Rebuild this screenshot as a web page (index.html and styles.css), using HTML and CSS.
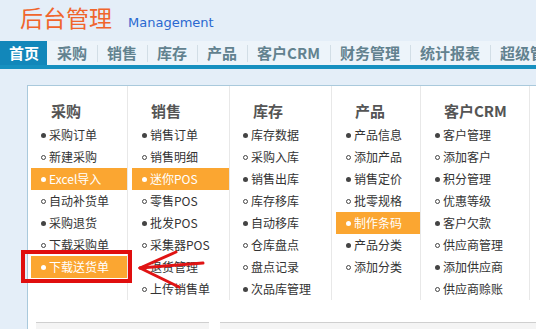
FILE: index.html
```html
<!DOCTYPE html>
<html lang="zh-CN">
<head>
  <meta charset="UTF-8">
  <title>后台管理</title>
  <link rel="stylesheet" href="styles.css">
</head>
<body>
  <div class="page">
    <header class="top">
      <h1 class="logo">后台管理</h1>
      <span class="logo-en">Management</span>
    </header>

    <nav class="menu">
      <a class="on first">首页</a>
      <a>采购</a>
      <a>销售</a>
      <a>库存</a>
      <a>产品</a>
      <a>客户CRM</a>
      <a>财务管理</a>
      <a>统计报表</a>
      <a>超级管理</a>
    </nav>

    <div class="panel">
      <div class="cols">
        <div class="col c1">
          <h3>采购</h3>
          <ul>
            <li class="dot">采购订单</li>
            <li class="ring">新建采购</li>
            <li class="dot cur">Excel导入</li>
            <li class="ring">自动补货单</li>
            <li class="dot">采购退货</li>
            <li class="ring">下载采购单</li>
            <li class="dot cur">下载送货单</li>
          </ul>
        </div>
        <div class="col c2">
          <h3>销售</h3>
          <ul>
            <li class="dot">销售订单</li>
            <li class="ring">销售明细</li>
            <li class="dot cur">迷你POS</li>
            <li class="ring">零售POS</li>
            <li class="dot">批发POS</li>
            <li class="ring">采集器POS</li>
            <li class="dot">退货管理</li>
            <li class="ring">上传销售单</li>
          </ul>
        </div>
        <div class="col c3">
          <h3>库存</h3>
          <ul>
            <li class="dot">库存数据</li>
            <li class="ring">采购入库</li>
            <li class="dot">销售出库</li>
            <li class="ring">库存移库</li>
            <li class="dot">自动移库</li>
            <li class="ring">仓库盘点</li>
            <li class="ring">盘点记录</li>
            <li class="dot">次品库管理</li>
          </ul>
        </div>
        <div class="col c4">
          <h3>产品</h3>
          <ul>
            <li class="dot">产品信息</li>
            <li class="ring">添加产品</li>
            <li class="dot">销售定价</li>
            <li class="ring">批零规格</li>
            <li class="dot cur">制作条码</li>
            <li class="dot">产品分类</li>
            <li class="ring">添加分类</li>
          </ul>
        </div>
        <div class="col c5">
          <h3>客户CRM</h3>
          <ul>
            <li class="dot">客户管理</li>
            <li class="ring">添加客户</li>
            <li class="dot">积分管理</li>
            <li class="ring">优惠等级</li>
            <li class="dot">客户欠款</li>
            <li class="ring">供应商管理</li>
            <li class="dot">添加供应商</li>
            <li class="ring">供应商赊账</li>
          </ul>
        </div>
        <div class="col c6"></div>
      </div>

      <div class="boxes">
        <div class="box b1"></div>
        <div class="box b2"></div>
      </div>
    </div>

    <!-- red annotation -->
    <div class="mark"></div>
    <svg class="arrow" width="80" height="50" viewBox="0 0 80 50">
      <g stroke="#e01414" stroke-width="3" stroke-linecap="round" fill="none">
        <line x1="4" y1="20" x2="67" y2="15"/>
        <line x1="4" y1="20" x2="40" y2="4"/>
        <line x1="4" y1="20" x2="43" y2="39"/>
      </g>
    </svg>
  </div>
</body>
</html>
```

FILE: styles.css
```css
html, body {
  margin: 0;
  height: 100%;
  overflow: hidden;
}

body {
  background-color: #e4eef8;
  font-family: "Noto Sans CJK SC", sans-serif;
  color: #333;
}

.page {
  position: relative;
}

/* header */
.top {
  height: 41px;
  display: flex;
  align-items: baseline;
  padding-left: 20px;
  box-sizing: border-box;
}

.logo {
  margin: 0;
  font-size: 23px;
  font-weight: normal;
  line-height: 34px;
  color: #f0652c;
  letter-spacing: 0;
}

.logo-en {
  margin-left: 16px;
  font-family: "DejaVu Sans", Verdana, sans-serif;
  font-size: 13px;
  color: #2a68d0;
}

/* menu */
.menu {
  display: flex;
  height: 24px;
  background-color: #edf4fa;
  border-bottom: 4px solid #1690c0;
  white-space: nowrap;
  overflow: hidden;
}

.menu a {
  position: relative;
  flex: none;
  padding: 0 10px;
  font-size: 15px;
  font-weight: bold;
  line-height: 24px;
  color: #62828f;
  cursor: pointer;
}

.menu a + a::before {
  content: "";
  position: absolute;
  left: 0;
  top: 4px;
  width: 1px;
  height: 17px;
  background-color: #d2dee6;
}

.menu a.first {
  padding: 0 8px 0 9px;
}

.menu a.on {
  background-color: #1287ba;
  color: #fff;
}

.menu a.on + a::before {
  display: none;
}

/* panel */
.panel {
  margin: 16px 0 0 27px;
  background-color: #fff;
  border-top: 1px solid #a9c9dc;
  border-left: 1px solid #a9c9dc;
  height: 400px;
}

.cols {
  display: flex;
}

.col {
  box-sizing: border-box;
  padding-top: 12px;
  height: 214px;
  border-right: 1px solid #e8e8e8;
  flex: none;
}

.c1 { width: 100px; }
.c2 { width: 102px; }
.c3 { width: 102px; }
.c4 { width: 89px; }
.c5 { width: 109px; }
.c6 { width: 60px; border-right: none; }

.col h3 {
  margin: 0;
  padding-left: 23px;
  font-size: 15px;
  font-weight: bold;
  line-height: 26px;
  color: #555;
}

.col ul {
  margin: 0;
  padding: 0;
  list-style: none;
}

.col li {
  position: relative;
  margin-left: 3px;
  padding-left: 18px;
  font-size: 12px;
  line-height: 22px;
  height: 22px;
  white-space: nowrap;
}

.c2 li, .c4 li, .c5 li {
  margin-left: 4px;
}

.col li::before {
  content: "";
  position: absolute;
  left: 10px;
  top: 9px;
  width: 5px;
  height: 5px;
  box-sizing: border-box;
  border-radius: 50%;
}

.col li.dot::before {
  background-color: #444;
}

.col li.ring::before {
  border: 1px solid #444;
}

.col li.cur {
  background-color: #fba631;
  color: #fff;
}

.col li.cur::before {
  background-color: #fff;
}

/* lower boxes */
.boxes {
  display: flex;
  gap: 11px;
  margin: 22px 0 0 8px;
}

.box {
  height: 60px;
  background-color: #f4f4f4;
  border-top: 1px solid #cfcfcf;
}

.b1 { width: 173px; }
.b2 { flex: 1; }

/* annotation overlay */
.mark {
  position: absolute;
  left: 21px;
  top: 250px;
  width: 111px;
  height: 33px;
  box-sizing: border-box;
  border: 4px solid #e00e0e;
}

.arrow {
  position: absolute;
  left: 136px;
  top: 248px;
}
```
